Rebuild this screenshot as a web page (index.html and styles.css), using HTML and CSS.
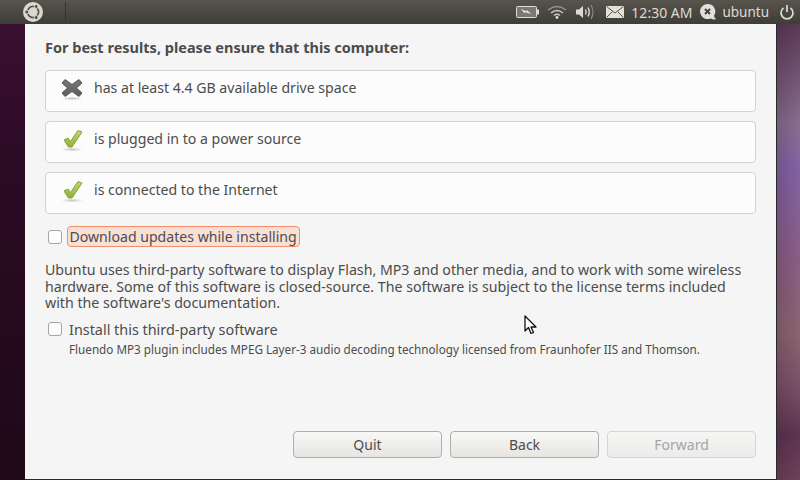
FILE: index.html
```html
<!DOCTYPE html>
<html lang="en">
<head>
<meta charset="utf-8">
<title>Install Ubuntu</title>
<link rel="stylesheet" href="styles.css">
</head>
<body>
<header class="panel">
  <div class="panel-left">
    <svg class="logo" width="20" height="20" viewBox="0 0 20 20"><circle cx="10" cy="10" r="10" fill="#dcd8cf"/><circle cx="10" cy="10" r="5.6" fill="none" stroke="#55534c" stroke-width="1.7"/><circle cx="3.8" cy="10" r="2" fill="#55534c" stroke="#dcd8cf"/><circle cx="13.2" cy="4.5" r="2" fill="#55534c" stroke="#dcd8cf"/><circle cx="13.2" cy="15.500" r="2" fill="#55534c" stroke="#dcd8cf"/></svg>
    <span class="sep"></span>
  </div>
  <div class="panel-right">
    <svg class="ind-batt" width="24" height="12" viewBox="0 0 24 12"><rect x="0.5" y="0.5" width="20" height="11" rx="1" fill="#7a7871" stroke="#e0dcd3"/><rect x="21" y="3.500" width="2" height="5" fill="#e0dcd3"/><path d="M5 3l5.500 2.500 0-1.500 5 4-6.500-2 0 1.500z" fill="#f4f2ee"/></svg>
    <svg class="ind-wifi" width="20" height="14" viewBox="0 0 20 14"><path d="M1 5Q10-2 19 5" fill="none" stroke="#97948c" stroke-width="1.400"/><path d="M4 8Q10 3 16 8M7 10.500Q10 8 13 10.500" fill="none" stroke="#cfcbc2" stroke-width="1.400"/><circle cx="10" cy="12.500" r="1.400" fill="#e4e0d7"/></svg>
    <svg class="ind-vol" width="20" height="16" viewBox="0 0 20 16"><path d="M0 5.500h3l4-3.500v12l-4-3.500h-3z" fill="#dfdbd2"/><path d="M9.500 5.500Q11 8 9.500 10.500M12 3.500Q14.500 8 12 12.500" fill="none" stroke="#dfdbd2" stroke-width="1.400"/><path d="M15 1Q19 8 15 15" fill="none" stroke="#8a8780" stroke-width="1.200"/></svg>
    <svg class="ind-mail" width="18" height="12" viewBox="0 0 18 12"><rect width="18" height="12" fill="#e4e0d7"/><path d="M0.500 0.500L9 7l8.500-6.500M0.500 11.500L6.500 5.500M17.500 11.500L11.500 5.500" fill="none" stroke="#55534d"/></svg>
    <span class="clock">12:30 AM</span>
    <svg class="ind-user" width="18" height="18" viewBox="0 0 18 18"><path d="M8.500 1a7.500 7.500 0 1 0 3 14.400q3 1.600 6 .6q-2.500-1-2.400-3.500A7.500 7.500 0 0 0 8.500 1z" fill="#e4e0d7"/><path d="M6 6l5 5M11 6l-5 5" stroke="#44423c" stroke-width="2"/></svg>
    <span class="user">ubuntu</span>
    <svg class="ind-power" width="16" height="16" viewBox="0 0 16 16"><path d="M4.500 4a6 6 0 1 0 7 0" fill="none" stroke="#dfdbd2" stroke-width="1.700"/><path d="M8 1v7" stroke="#dfdbd2" stroke-width="1.700"/></svg>
  </div>
</header>
<div class="desktop">
  <main class="window">
    <h1 class="title">For best results, please ensure that this computer:</h1>
    <ul class="checks">
      <li class="check">
        <svg class="check-icon" width="24" height="24" viewBox="0 0 24 24"><defs><radialGradient id="sh"><stop offset="0" stop-color="#c4c4c4"/><stop offset="1" stop-color="#fbfbfb"/></radialGradient><linearGradient id="gr" x1="0" y1="0" x2="0" y2="1"><stop offset="0" stop-color="#c2d96a"/><stop offset="1" stop-color="#8fb03c"/></linearGradient><linearGradient id="gx" x1="0" y1="0" x2="0" y2="1"><stop offset="0" stop-color="#777"/><stop offset="1" stop-color="#5c5c5c"/></linearGradient></defs><ellipse cx="12" cy="19.500" rx="11" ry="2" fill="url(#sh)"/><path d="M5 .5l7 5 7-5 3 3.500-5.500 5 5.500 5-3 3.500-7-5-7 5-3-3.500 5.500-5-5.500-5z" fill="url(#gx)" stroke="#5a5a5a" stroke-linejoin="round"/></svg>
        <span>has at least 4.4 GB available drive space</span>
      </li>
      <li class="check">
        <svg class="check-icon" width="24" height="24" viewBox="0 0 24 24"><ellipse cx="12" cy="19.500" rx="11" ry="2" fill="url(#sh)"/><path d="M4 10l4-2 2.500 3.500L18 .5l4 1.500L12 17H8.500z" fill="url(#gr)" stroke="#84a235" stroke-linejoin="round"/></svg>
        <span>is plugged in to a power source</span>
      </li>
      <li class="check">
        <svg class="check-icon" width="24" height="24" viewBox="0 0 24 24"><ellipse cx="12" cy="19.500" rx="11" ry="2" fill="url(#sh)"/><path d="M4 10l4-2 2.500 3.500L18 .5l4 1.500L12 17H8.500z" fill="url(#gr)" stroke="#84a235" stroke-linejoin="round"/></svg>
        <span>is connected to the Internet</span>
      </li>
    </ul>
    <div class="opt opt-updates">
      <span class="box"></span>
      <span class="focus">Download updates while installing</span>
    </div>
    <p class="para">Ubuntu uses third-party software to display Flash, MP3 and other media, and to work with some wireless hardware. Some of this software is closed-source. The software is subject to the license terms included with the software's documentation.</p>
    <div class="opt opt-third">
      <span class="box"></span>
      <span class="third-label">Install this third-party software</span>
    </div>
    <p class="note">Fluendo MP3 plugin includes MPEG Layer-3 audio decoding technology licensed from Fraunhofer IIS and Thomson.</p>
    <div class="buttons">
      <button class="btn">Quit</button>
      <button class="btn">Back</button>
      <button class="btn btn-disabled">Forward</button>
    </div>
  </main>
</div>
<svg class="cursor" width="14" height="20" viewBox="0 0 14 20"><path d="M1 1v15l3.500-3.500 2.500 6 2.500-1-2.500-5.500h5z" fill="#fff" stroke="#111" stroke-width="1.300" stroke-linejoin="round"/></svg>
</body>
</html>
```
FILE: styles.css
```css
* { box-sizing: border-box; }
html, body { margin: 0; height: 100%; }
body {
  width: 800px; height: 480px; overflow: hidden; position: relative;
  display: flex; flex-direction: column;
  font-family: "Noto Sans", "Open Sans", sans-serif;
  color: #4c4c4c;
  background: #2a0a22;
}
.panel {
  height: 24px; flex: none; display: flex; justify-content: space-between; align-items: center;
  background: linear-gradient(#56544c, #3f3d38);
  color: #dfdbd2;
}
.panel-left { display: flex; align-items: center; padding-left: 23px; }
.logo { display: block; }
.sep { width: 1px; height: 20px; background: #35332f; margin-left: 22px; }
.panel-right { display: flex; align-items: center; padding-right: 5px; }
.panel-right svg { display: block; flex: none; }
.ind-batt { margin-right: 7px; }
.ind-wifi { margin-right: 9px; }
.ind-vol { margin-right: 10px; }
.ind-mail { margin-right: 7px; }
.clock { font-size: 14px; margin-right: 7px; }
.ind-user { margin-right: 5px; }
.user { font-size: 13.5px; margin-right: 10px; }
.desktop {
  flex: 1; min-height: 0; display: flex; padding: 0 23px 0 25px;
  background:
    linear-gradient(#3a1030, #2c0b25 30%, #1f0818) left / 50% 100% no-repeat,
    linear-gradient(to left, transparent, rgba(30,10,30,.18) 23px) right / 50% 100% no-repeat,
    linear-gradient(#5a3a55 0%, #8a6f90 22%, #8362a6 32%, #8a5f85 52%, #8a6670 68%, #7a5068 80%, #5c3550 90%, #70405c 100%) right / 50% 100% no-repeat;
}
.window {
  flex: 1; background: #f5f5f5; padding: 15px 20px 0; display: flex; flex-direction: column;
  border-right: 1px solid #2a2a2c; border-bottom: 1px solid #2a2a2c;
}
.title { margin: 0 0 15px; font-size: 14.5px; line-height: 16px; font-weight: 700; color: #4c4c4c; }
.checks { list-style: none; margin: 0; padding: 0; display: flex; flex-direction: column; gap: 9px; }
.check {
  height: 42px; display: flex; align-items: center; padding-left: 14px; gap: 10px;
  background: #fcfcfc; border: 1px solid #d4d2ce; border-radius: 4px; font-size: 14.1px;
}
.check span { position: relative; top: -4px; }
.check-icon { flex: none; }
.opt { display: flex; align-items: center; font-size: 14.1px; }
.opt-updates { margin: 12px 0 0 3px; gap: 5px; }
.opt-third { margin: 8px 0 0 3px; gap: 7px; }
.third-label { font-size: 14.4px; }
.box { width: 14px; height: 14px; background: #fcfcfc; border: 1px solid #a8a5a0; border-radius: 3px; flex: none; }
.focus { background: #f8e0d6; border: 1px solid #f0906a; border-radius: 4px; padding: 0 2px 0 1.500px; height: 21px; line-height: 19px; }
.para { margin: 15px 0 0; padding-right: 5px; font-size: 14.2px; line-height: 16.500px; }
.note { margin: 3px 0 0 24px; font-size: 11.7px; line-height: 14px; }
.buttons { margin-top: auto; margin-bottom: 21px; display: flex; justify-content: flex-end; gap: 8px; }
.btn {
  width: 149px; height: 27px; font: inherit; font-size: 14px; color: #4c4c4c;
  background: linear-gradient(#f8f8f7, #e6e5e2); border: 1px solid #b0aea9; border-radius: 4px; padding: 0;
}
.btn-disabled { color: #a5a5a5; border-color: #d6d5d2; background: linear-gradient(#f6f6f5, #ecebe9); }
.cursor { position: absolute; left: 524px; top: 315px; }
```
